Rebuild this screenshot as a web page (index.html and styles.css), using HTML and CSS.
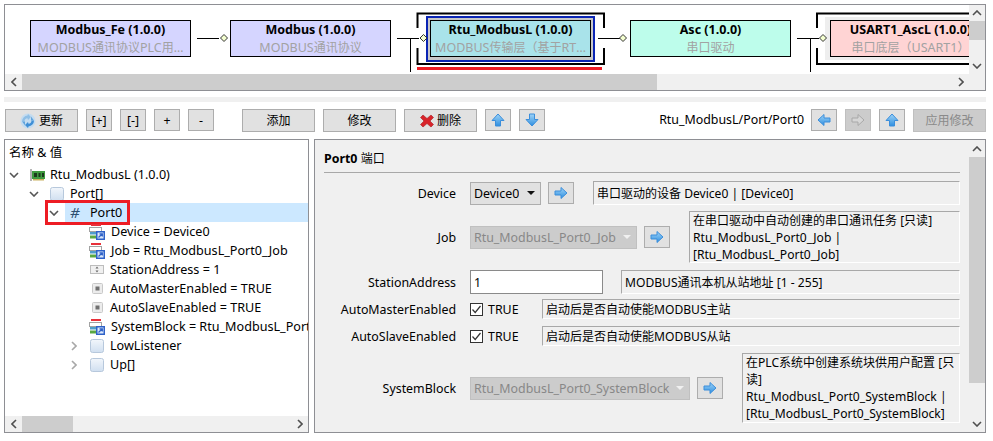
FILE: index.html
```html
<!DOCTYPE html>
<html lang="zh">
<head>
<meta charset="utf-8">
<title>Rtu_ModbusL</title>
<link rel="stylesheet" href="styles.css">
</head>
<body>
<svg class="defs" width="0" height="0" aria-hidden="true">
  <defs>
    <linearGradient id="blueArrow" x1="0" y1="0" x2="0" y2="1"><stop offset="0" stop-color="#9fd4f7"/><stop offset="1" stop-color="#2f8fe0"/></linearGradient>
    <linearGradient id="sq" x1="0" y1="0" x2="0" y2="1"><stop offset="0" stop-color="#f2f6fb"/><stop offset="1" stop-color="#d0dff0"/></linearGradient>
    <symbol id="i-up" viewBox="0 0 14 14"><path d="M7 1 13 7.500H9.500V13h-5V7.500H1z" fill="url(#blueArrow)" stroke="#3b8edb"/></symbol>
    <symbol id="i-down" viewBox="0 0 14 14"><path d="M7 13 13 6.500H9.500V1h-5v5.500H1z" fill="url(#blueArrow)" stroke="#3b8edb"/></symbol>
    <symbol id="i-left" viewBox="0 0 14 14"><path d="M1 7 7 1.500V5h6v4H7v3.500z" fill="url(#blueArrow)" stroke="#3b8edb"/></symbol>
    <symbol id="i-right" viewBox="0 0 14 14"><path d="M13 7 7 1.500V5H1v4h6v3.500z" fill="url(#blueArrow)" stroke="#3b8edb"/></symbol>
    <symbol id="i-right-off" viewBox="0 0 14 14"><path d="M13 7 7 1.500V5H1v4h6v3.500z" fill="#d6d6d6" stroke="#a8a8a8"/></symbol>
    <symbol id="i-x" viewBox="0 0 14 14"><path d="M3 1 7 4.500 11 1 13.500 3.500 10 7l3.500 3.500L11 13 7 9.500 3 13 .5 10.500 4 7 .5 3.500z" fill="#d8232a" stroke="#a81c20" stroke-width=".6"/></symbol>
    <symbol id="i-refresh" viewBox="0 0 16 16"><circle cx="8" cy="8" r="7.500" fill="#c4dcf0"/><path d="M2 8.500A6 6 0 0 1 7.500 2.500L8 1l3 3-3 3-.5-1.800A3.300 3.300 0 0 0 4.500 8.500z" fill="#8fbfe6"/><path d="M14 7.500A6 6 0 0 1 8.500 13.500L8 15l-3-3 3-3 .5 1.800A3.300 3.300 0 0 0 11.500 7.500z" fill="#3f8fd6"/><path d="M11 3.500 14 7.500H11zM5 12.500 2 8.500H5z" fill="#62a5de"/></symbol>
    <symbol id="i-chip" viewBox="0 0 16 12"><path d="M1 0h2v12H1z" fill="#b5b5b5"/><path d="M3 2h13v8H3z" fill="#3f9a3f"/><path d="M5 4h3v4H5zM9.500 4h2v4h-2zM13 4h2v4h-2z" fill="#1c3a1c"/><path d="M4 10h11v1.500H4z" fill="#c8b060"/></symbol>
    <symbol id="i-square" viewBox="0 0 14 14"><rect x=".5" y=".5" width="13" height="13" rx="2" fill="url(#sq)" stroke="#b7c8dc"/></symbol>
    <symbol id="i-prop" viewBox="0 0 16 16"><path d="M2 0h10v2H2z" fill="#e8303a"/><rect x=".5" y="3.500" width="12" height="4" fill="#fff" stroke="#444" stroke-dasharray="1 1"/><path d="M1 8h8v2.500H1z" fill="#4f9ec9"/><path d="M1 11.500h6v3H1z" fill="#5aa843"/><path d="M7 7h9v9H7z" fill="#2f62c8"/><path d="M8.500 8.500h6v6h-6z" fill="#dce8fa"/><path d="M9.500 13.500 13 10M10.500 9.800H13.300V12.600" fill="none" stroke="#2f62c8" stroke-width="1.300"/></symbol>
    <symbol id="i-spin" viewBox="0 0 14 9"><rect x=".5" y=".5" width="13" height="8" fill="#f0f0f0" stroke="#bdbdbd"/><path d="M7 1.500 8.500 3.500h-3zM7 7.500 5.500 5.500h3z" fill="#666"/></symbol>
    <symbol id="i-bool" viewBox="0 0 11 11"><rect x=".5" y=".5" width="10" height="10" rx="1" fill="#ececec" stroke="#c8c8c8"/><rect x="3.500" y="3.500" width="4" height="4" fill="#707070"/></symbol>
    <symbol id="c-down" viewBox="0 0 10 6"><path d="M1 1 5 5 9 1" fill="none" stroke="currentColor" stroke-width="1.600"/></symbol>
    <symbol id="c-up" viewBox="0 0 10 6"><path d="M1 5 5 1 9 5" fill="none" stroke="currentColor" stroke-width="1.600"/></symbol>
    <symbol id="c-right" viewBox="0 0 6 10"><path d="M1 1 5 5 1 9" fill="none" stroke="currentColor" stroke-width="1.600"/></symbol>
    <symbol id="c-left" viewBox="0 0 6 10"><path d="M5 1 1 5 5 9" fill="none" stroke="currentColor" stroke-width="1.600"/></symbol>
  </defs>
</svg>

<div class="app">
  <section class="diagram">
    <div class="canvas">
      <svg class="wires" width="965" height="69" viewBox="0 0 965 69">
        <rect x="820" y="12" width="145" height="43" fill="#eeeeee"/>
        <rect x="422" y="12" width="167" height="44" fill="#c8c8c8"/>
        <rect x="422" y="12" width="167" height="44" fill="none" stroke="#0a24b4" stroke-width="2"/>
        <path d="M412.500 23V8.500H599V23M412.500 43V59H599V43" fill="none" stroke="#000" stroke-width="2"/>
        <path d="M965 8.500H812V23M812 43V59H965" fill="none" stroke="#000" stroke-width="2"/>
        <rect x="412" y="62" width="185" height="3" fill="#ed1c24"/>
        <path d="M192 33.500h22M392 33.500h22M405.500 33.500V67M593 33.500h22M792 33.500h22M805.500 33.500V67" stroke="#000" fill="none"/>
        <path d="M219 29.500l3.500 3.500-3.500 3.500-3.500-3.500zM418.500 29.500l3.500 3.500-3.500 3.500-3.500-3.500zM618 29.500l3.500 3.500-3.500 3.500-3.500-3.500zM818 29.500l3.500 3.500-3.500 3.500-3.500-3.500z" fill="#f4ffd0" stroke="#333"/>
      </svg>
      <div class="node node-fe"><b>Modbus_Fe (1.0.0)</b><span><em>MODBUS</em>通讯协议<em>PLC</em>用...</span></div>
      <div class="node node-modbus"><b>Modbus (1.0.0)</b><span><em>MODBUS</em>通讯协议</span></div>
      <div class="node node-rtu"><b>Rtu_ModbusL (1.0.0)</b><span><em>MODBUS</em>传输层（基于<em>RT</em>...</span></div>
      <div class="node node-asc"><b>Asc (1.0.0)</b><span>串口驱动</span></div>
      <div class="node node-usart"><b>USART1_AscL (1.0.0)</b><span>串口底层（<em>USART1</em>）</span></div>
    </div>
    <div class="vbar vbar-top">
      <span class="arrow"><svg class="cv"><use href="#c-up"/></svg></span>
      <span class="thumb thumb-top-v"></span>
      <span class="fill"></span>
      <span class="arrow"><svg class="cv"><use href="#c-down"/></svg></span>
    </div>
    <div class="hbar">
      <span class="arrow"><svg class="ch"><use href="#c-left"/></svg></span>
      <span class="thumb thumb-top-h"></span>
      <span class="fill"></span>
      <span class="arrow"><svg class="ch"><use href="#c-right"/></svg></span>
    </div>
    <div class="corner"></div>
  </section>

  <div class="splitter"></div>

  <div class="toolbar">
    <button class="btn wide"><svg class="ic16"><use href="#i-refresh"/></svg>更新</button>
    <button class="btn sq g8">[+]</button>
    <button class="btn sq g8">[-]</button>
    <button class="btn sq g8">+</button>
    <button class="btn sq g8">-</button>
    <button class="btn wide g28">添加</button>
    <button class="btn wide g8">修改</button>
    <button class="btn wide g8"><svg class="ic14"><use href="#i-x"/></svg>删除</button>
    <button class="btn sq g8"><svg class="ic14"><use href="#i-up"/></svg></button>
    <button class="btn sq g8"><svg class="ic14"><use href="#i-down"/></svg></button>
    <span class="path">Rtu_ModbusL/Port/Port0</span>
    <button class="btn sq"><svg class="ic14"><use href="#i-left"/></svg></button>
    <button class="btn sq g8 off"><svg class="ic14"><use href="#i-right-off"/></svg></button>
    <button class="btn sq g8"><svg class="ic14"><use href="#i-up"/></svg></button>
    <button class="btn wide g8 off">应用修改</button>
  </div>

  <div class="main">
    <section class="tree">
      <div class="tree-body">
        <div class="tree-head">名称 &amp; 值</div>
        <div class="row d0"><span class="tw open"><svg class="cv"><use href="#c-down"/></svg></span><span class="lbl"><svg class="ti chip"><use href="#i-chip"/></svg>Rtu_ModbusL (1.0.0)</span></div>
        <div class="row d1"><span class="tw open"><svg class="cv"><use href="#c-down"/></svg></span><span class="lbl"><svg class="ti"><use href="#i-square"/></svg>Port[]</span></div>
        <div class="row d2"><span class="tw open"><svg class="cv"><use href="#c-down"/></svg></span><span class="lbl sel"><span class="hash">#</span>Port0</span><span class="mark"></span></div>
        <div class="row d3"><span class="tw"></span><span class="lbl"><svg class="ti prop"><use href="#i-prop"/></svg>Device = Device0</span></div>
        <div class="row d3"><span class="tw"></span><span class="lbl"><svg class="ti prop"><use href="#i-prop"/></svg>Job = Rtu_ModbusL_Port0_Job</span></div>
        <div class="row d3"><span class="tw"></span><span class="lbl"><svg class="ti spin"><use href="#i-spin"/></svg>StationAddress = 1</span></div>
        <div class="row d3"><span class="tw"></span><span class="lbl"><svg class="ti bool"><use href="#i-bool"/></svg>AutoMasterEnabled = TRUE</span></div>
        <div class="row d3"><span class="tw"></span><span class="lbl"><svg class="ti bool"><use href="#i-bool"/></svg>AutoSlaveEnabled = TRUE</span></div>
        <div class="row d3"><span class="tw"></span><span class="lbl"><svg class="ti prop"><use href="#i-prop"/></svg>SystemBlock = Rtu_ModbusL_Port</span></div>
        <div class="row d3"><span class="tw shut"><svg class="ch"><use href="#c-right"/></svg></span><span class="lbl"><svg class="ti"><use href="#i-square"/></svg>LowListener</span></div>
        <div class="row d3"><span class="tw shut"><svg class="ch"><use href="#c-right"/></svg></span><span class="lbl"><svg class="ti"><use href="#i-square"/></svg>Up[]</span></div>
      </div>
      <div class="hbar">
        <span class="arrow"><svg class="ch"><use href="#c-left"/></svg></span>
        <span class="thumb thumb-tree"></span>
        <span class="fill"></span>
        <span class="arrow"><svg class="ch"><use href="#c-right"/></svg></span>
      </div>
    </section>

    <section class="panel">
      <div class="form">
        <h2 class="title"><b>Port0</b> <span class="zh">端口</span></h2>
        <div class="frow r-device">
          <label>Device</label>
          <div class="sel-box w71"><span>Device0</span><i class="caret"></i></div>
          <button class="btn sq go"><svg class="ic14"><use href="#i-right"/></svg></button>
          <div class="desc"><span>串口驱动的设备 <em>Device0 | [Device0]</em></span></div>
        </div>
        <div class="frow r-job">
          <label>Job</label>
          <div class="sel-box w167 dis"><span>Rtu_ModbusL_Port0_Job</span><i class="caret"></i></div>
          <button class="btn sq go"><svg class="ic14"><use href="#i-right"/></svg></button>
          <div class="desc"><span>在串口驱动中自动创建的串口通讯任务 <em>[</em>只读<em>]</em><br><em>Rtu_ModbusL_Port0_Job |</em><br><em>[Rtu_ModbusL_Port0_Job]</em></span></div>
        </div>
        <div class="frow r-station">
          <label>StationAddress</label>
          <input class="num" value="1" readonly>
          <div class="desc"><span><em>MODBUS</em>通讯本机从站地址 <em>[1 - 255]</em></span></div>
        </div>
        <div class="frow r-bool">
          <label>AutoMasterEnabled</label>
          <div class="check"><svg class="box" viewBox="0 0 13 13"><rect x=".5" y=".5" width="12" height="12" fill="#fff" stroke="#333"/><path d="M2.500 6.500 5.200 9.500 10.500 3" fill="none" stroke="#333" stroke-width="1.200"/></svg>TRUE</div>
          <div class="desc"><span>启动后是否自动使能<em>MODBUS</em>主站</span></div>
        </div>
        <div class="frow r-bool">
          <label>AutoSlaveEnabled</label>
          <div class="check"><svg class="box" viewBox="0 0 13 13"><rect x=".5" y=".5" width="12" height="12" fill="#fff" stroke="#333"/><path d="M2.500 6.500 5.200 9.500 10.500 3" fill="none" stroke="#333" stroke-width="1.200"/></svg>TRUE</div>
          <div class="desc"><span>启动后是否自动使能<em>MODBUS</em>从站</span></div>
        </div>
        <div class="frow r-system">
          <label>SystemBlock</label>
          <div class="sel-box w220 dis"><span>Rtu_ModbusL_Port0_SystemBlock</span><i class="caret"></i></div>
          <button class="btn sq go"><svg class="ic14"><use href="#i-right"/></svg></button>
          <div class="desc"><span>在<em>PLC</em>系统中创建系统块供用户配置 <em>[</em>只<br>读<em>]</em><br><em>Rtu_ModbusL_Port0_SystemBlock |</em><br><em>[Rtu_ModbusL_Port0_SystemBlock]</em></span></div>
        </div>
      </div>
      <div class="vbar">
        <span class="arrow"><svg class="cv"><use href="#c-up"/></svg></span>
        <span class="thumb thumb-panel"></span>
        <span class="fill"></span>
        <span class="arrow"><svg class="cv"><use href="#c-down"/></svg></span>
      </div>
    </section>
  </div>
</div>
</body>
</html>
```

FILE: styles.css
```css
* { box-sizing: border-box; }
html, body { margin: 0; height: 100%; background: #fff; }
body {
  font: 12.4px/17px "Noto Sans", "Noto Sans CJK SC", sans-serif;
  color: #000;
  overflow: hidden;
}
em { font-style: normal; font-size: 12.5px; }
.zh { font-size: 12px; }
.defs { position: absolute; }
.app { width: 993px; height: 441px; padding: 4px 7px 0 4px; display: flex; flex-direction: column; }

/* Diagram */
.diagram {
  height: 87px;
  border: 1px solid #8e8f94;
  display: grid;
  grid-template-columns: 1fr 16px;
  grid-template-rows: 1fr 16px;
  flex: none;
}
.canvas { position: relative; overflow: hidden; background: #fff; }
.wires { position: absolute; left: 0; top: 0; }
.node {
  position: absolute;
  top: 15px;
  width: 161px;
  height: 37px;
  border: 1px solid #000;
  text-align: center;
  line-height: 18px;
  white-space: nowrap;
  display: flex;
  flex-direction: column;
  justify-content: center;
}
.node b { font-weight: 700; font-size: 12.5px; }
.node span { color: #a2a2a2; font-size: 12px; }
.node-fe { left: 25px; background: #d5d5ff; }
.node-modbus { left: 225px; background: #d5d5ff; }
.node-rtu { left: 425px; background: #a9e3ea; }
.node-asc { left: 625px; background: #bdfdeb; }
.node-usart { left: 825px; background: #ffd4d4; }

/* Scrollbars */
.hbar { height: 16px; background: #f0f0f0; display: flex; flex: none; }
.vbar { width: 16px; background: #f0f0f0; display: flex; flex-direction: column; flex: none; }
.corner { background: #f0f0f0; }
.arrow { flex: none; display: flex; align-items: center; justify-content: center; color: #505050; }
.hbar .arrow { width: 17px; }
.vbar .arrow { height: 17px; }
.vbar-top { min-height: 0; }
.vbar-top .arrow { height: 16px; }
.fill { flex: 1; min-width: 0; min-height: 0; }
.thumb { background: #cdcdcd; flex: none; }
.thumb-top-h { width: 635px; }
.thumb-top-v { height: 19px; }
.thumb-tree { width: 51px; }
.thumb-panel { height: 226px; }
.cv { width: 10px; height: 6px; }
.ch { width: 6px; height: 10px; }

.splitter { height: 5px; margin-top: 6px; background: #f0f0f0; flex: none; }

/* Toolbar */
.toolbar { display: flex; align-items: flex-start; height: 23px; margin: 7px 0 7px 1px; flex: none; }
.btn {
  font: inherit;
  color: #000;
  background: #e1e1e1;
  border: 1px solid #adadad;
  padding: 0;
  height: 22px;
  display: inline-flex;
  align-items: center;
  justify-content: center;
  gap: 3px;
  flex: none;
}
.wide { width: 73px; height: 23px; font-size: 12px; }
.sq { width: 26px; }
.g8 { margin-left: 8px; }
.g28 { margin-left: 28px; }
.off { background: #cccccc; color: #8a8a8a; border-color: #bfbfbf; }
.path { margin-left: auto; margin-right: 7px; line-height: 22px; }
.ic16 { width: 16px; height: 16px; }
.ic14 { width: 14px; height: 14px; }

/* Main */
.main { display: flex; gap: 5px; height: 294px; flex: none; }
.tree {
  width: 305px;
  border: 1px solid #8e8f94;
  display: flex;
  flex-direction: column;
  flex: none;
}
.tree-body { flex: 1; min-height: 0; overflow: hidden; }
.tree-head { height: 24px; padding: 4px 0 0 4px; line-height: 17px; margin-bottom: 1px; font-size: 12.5px; }
.row { height: 19px; display: flex; position: relative; white-space: nowrap; }
.d0 { padding-left: 0; }
.d1 { padding-left: 20px; }
.d2 { padding-left: 40px; }
.d3 { padding-left: 60px; }
.tw { width: 20px; flex: none; display: flex; align-items: center; justify-content: center; color: #555; padding-right: 2px; }
.tw.shut { color: #a8a8a8; }
.lbl { flex: 1; min-width: 0; overflow: hidden; display: flex; align-items: center; line-height: 19px; font-size: 12.6px; }
.sel { background: #cce8ff; }
.ti { width: 14px; height: 14px; margin: 0 6px 0 5px; flex: none; }
.ti.chip { width: 16px; height: 12px; margin: 0 5px 0 4px; }
.ti.prop { width: 16px; height: 16px; margin: 0 6px 0 4px; }
.ti.spin { width: 14px; height: 9px; }
.ti.bool { width: 11px; height: 11px; margin: 0 7px 0 7px; }
.hash { width: 25px; flex: none; padding-left: 5px; font-size: 15px; font-style: italic; color: #2d4f70; }
.mark {
  position: absolute;
  left: 40px;
  top: -3px;
  width: 85px;
  height: 25px;
  border: 3px solid #ed1c24;
}

/* Panel */
.panel {
  flex: 1;
  min-width: 0;
  border: 1px solid #8e8f94;
  background: #f0f0f0;
  display: flex;
}
.form { flex: 1; min-width: 0; padding: 0 9px; overflow: hidden; }
.title {
  font: inherit;
  margin: 0 0 8px;
  height: 33px;
  padding-top: 10px;
  border-bottom: 1px solid #a8a8a8;
}
.frow { display: flex; align-items: center; }
.frow label { width: 132px; margin-right: 14px; text-align: right; flex: none; white-space: nowrap; }
.r-device { height: 24px; margin-bottom: 6px; }
.r-job { height: 52px; margin-bottom: 7px; }
.r-station { height: 24px; margin-bottom: 5px; }
.r-bool { height: 20px; margin-bottom: 7px; }
.r-system { height: 70px; }
.sel-box {
  height: 23px;
  background: #e1e1e1;
  border: 1px solid #adadad;
  padding: 0 3px;
  display: flex;
  align-items: center;
  justify-content: space-between;
  white-space: nowrap;
  flex: none;
}
.sel-box span { overflow: hidden; }
.dis { background: #cccccc; color: #888; border-color: #c0c0c0; }
.w71 { width: 71px; }
.w167 { width: 167px; }
.w220 { width: 220px; }
.caret { width: 0; height: 0; border: 4px solid transparent; border-top: 4px solid #111; border-bottom: 0; flex: none; margin-right: 2px; }
.dis .caret { border-top-color: #f0f0f0; }
.go { margin-left: 7px; }
.desc {
  flex: 1;
  min-width: 0;
  align-self: stretch;
  margin-left: 18px;
  padding: 0 3px;
  display: flex;
  align-items: center;
  border: 1px solid;
  border-color: #a8a8a8 #fff #fff #a8a8a8;
  font-size: 12px;
  line-height: 17px;
  overflow: hidden;
  white-space: nowrap;
}
.desc em { font-size: 12.1px; }
.go + .desc { margin-left: 19px; }
.num {
  font: inherit;
  width: 133px;
  height: 24px;
  border: 1px solid #8a8a8a;
  background: #fff;
  padding: 0 3px;
  flex: none;
  outline: none;
}
.check { width: 54px; display: flex; align-items: center; gap: 5px; flex: none; }
.box { width: 13px; height: 13px; flex: none; }
```
